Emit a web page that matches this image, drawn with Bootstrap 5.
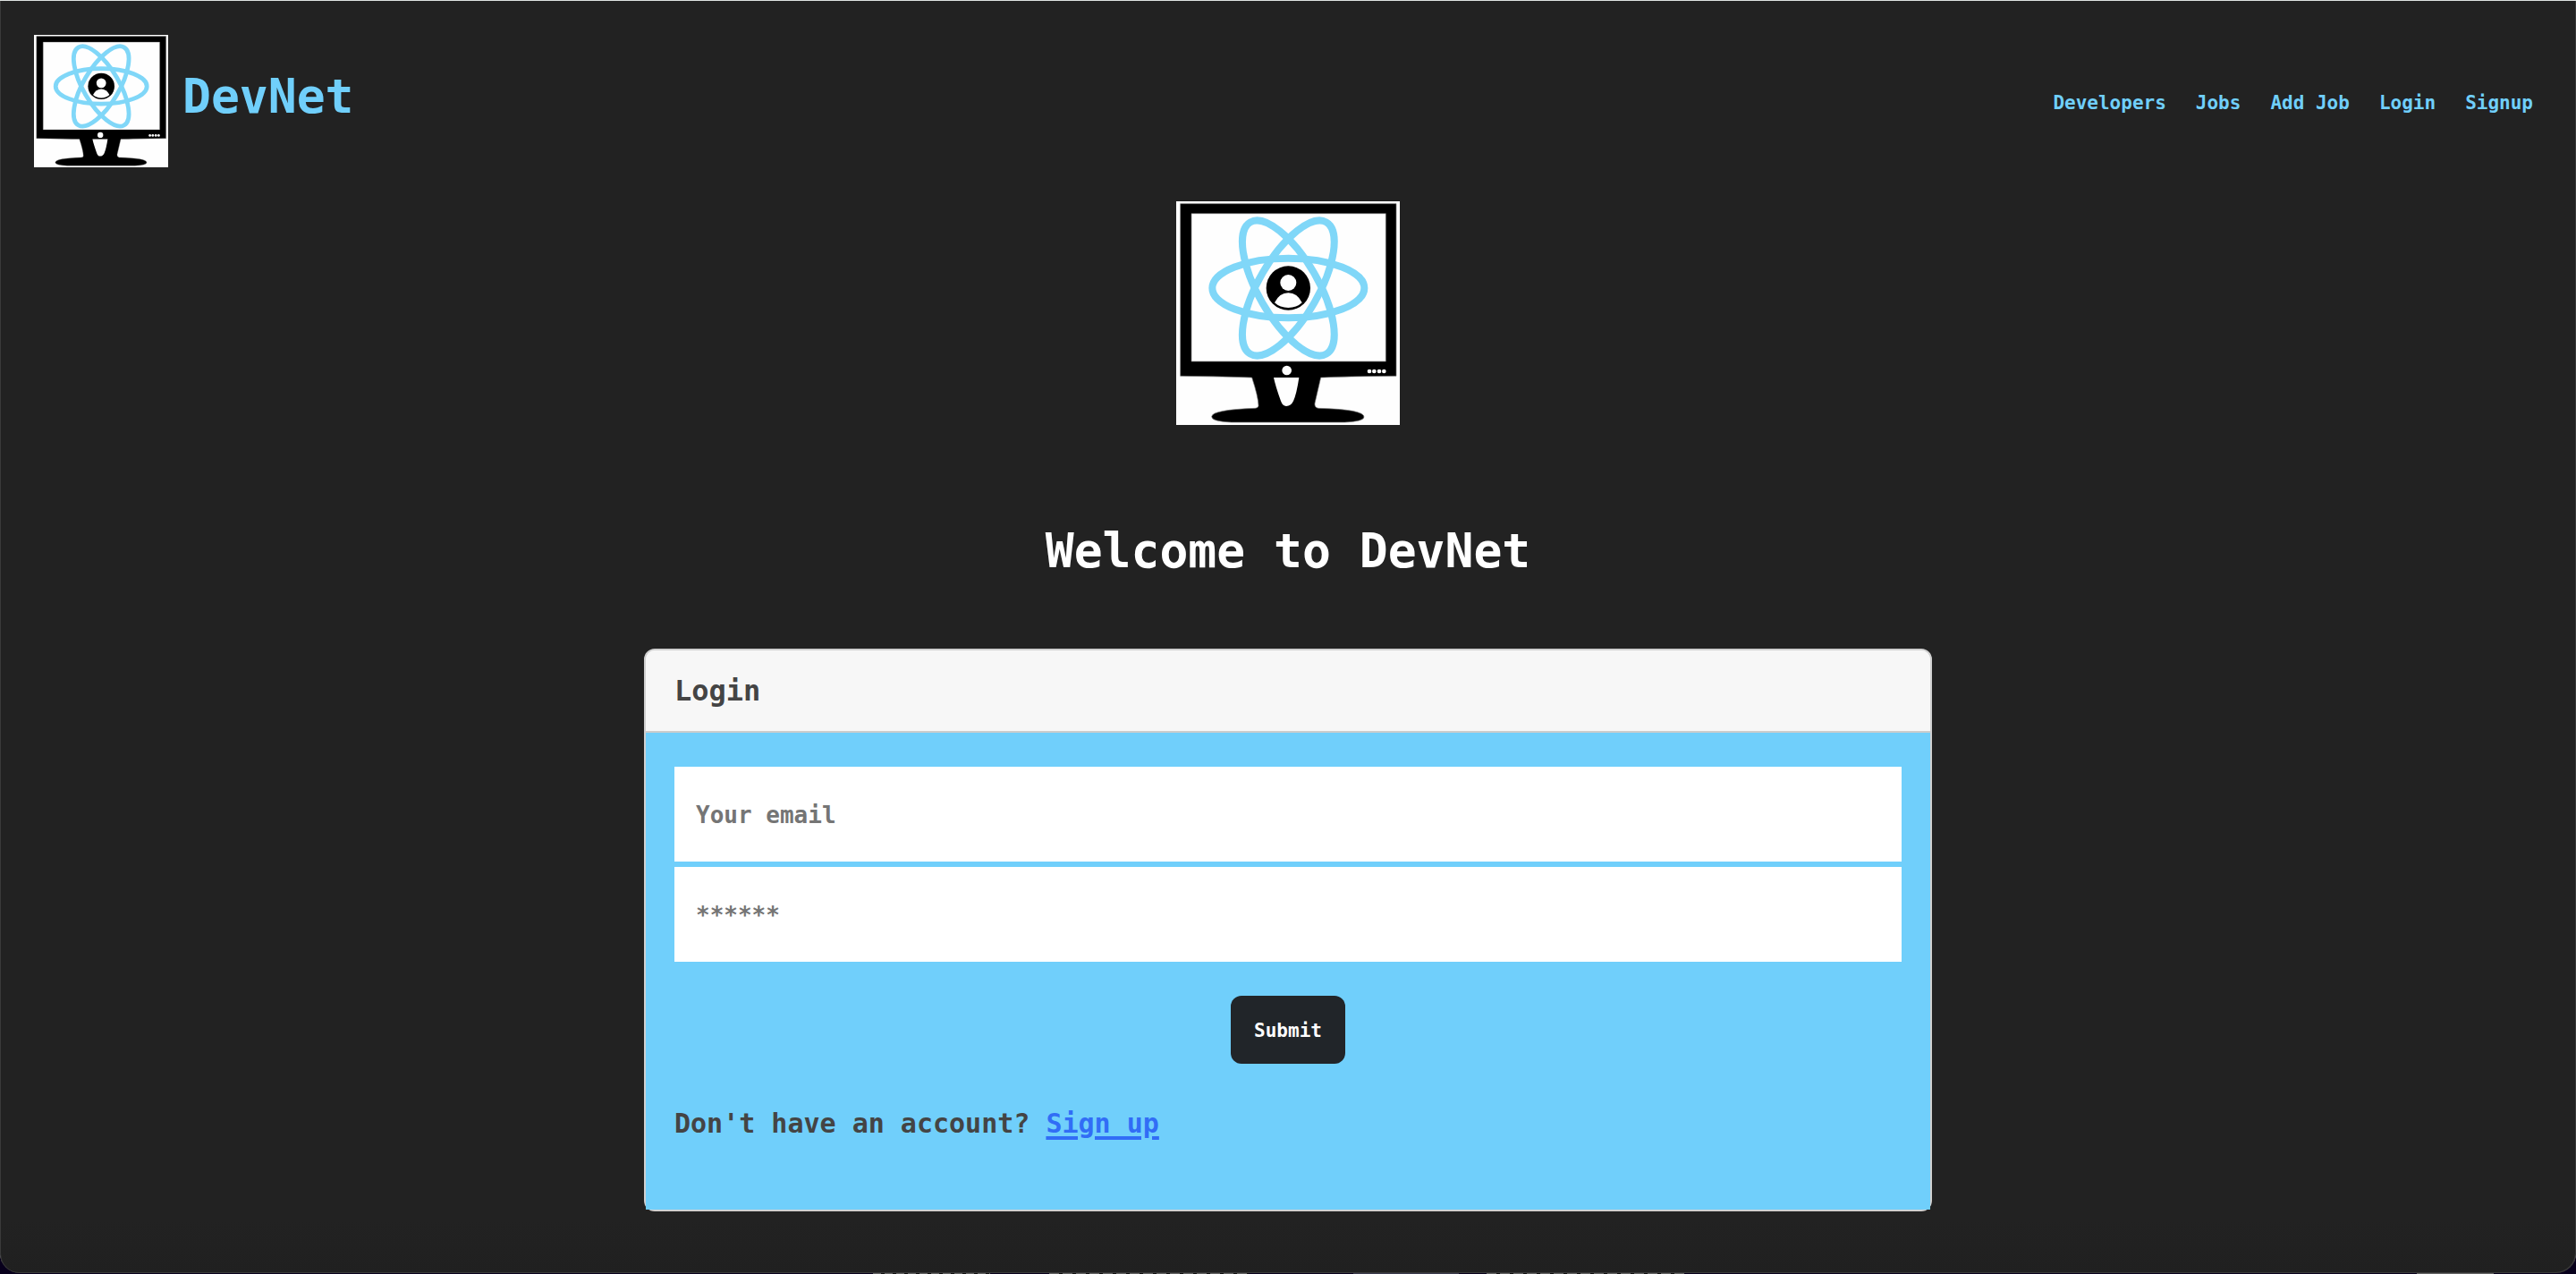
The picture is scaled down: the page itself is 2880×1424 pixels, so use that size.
<!DOCTYPE html>
<html lang="en">
<head>
<meta charset="utf-8">
<meta name="viewport" content="width=device-width, initial-scale=1">
<title>DevNet</title>
<link rel="stylesheet" href="https://cdn.jsdelivr.net/npm/bootstrap@5.3.0/dist/css/bootstrap.min.css">
<style>
  :root { --sky: #70cffb; --ink: #444; }
  body {
    font-family: "DejaVu Sans Mono", "Liberation Mono", monospace;
    font-weight: 700;
    background: #08001c;
    color: #fff;
  }
  .window {
    background: linear-gradient(to top, #202020, #222 60px);
    box-shadow: inset 0 1px #dfe3e2, inset 1px 0 #3a3a3a, inset -1px -1px #3a3a3a;
    border-radius: 0 0 22px 22px;
  }
  .site-nav { padding: 39px 48px 38px 38px; }
  .nav-logo { width: 150px; height: 148px; }
  .brand-name { font-size: 53px; line-height: 64px; padding-bottom: 10px; color: var(--sky); }
  .menu { gap: 33px; font-size: 21px; line-height: 32px; padding-top: 4px; }
  .menu a { color: var(--sky); }
  .hero-logo { width: 250px; height: 250px; }
  .hero-title { font-size: 53px; line-height: 64px; font-weight: 700; margin: 109px 0 77px; }
  .login-card {
    --bs-card-border-width: 2px;
    --bs-card-border-radius: 12px;
    --bs-card-inner-border-radius: 10px;
    --bs-card-border-color: #d0d0d0;
    --bs-card-cap-bg: #f7f7f7;
    --bs-card-bg: #f7f7f7;
    color: var(--ink);
  }
  .login-card .card-header { padding: 18px 32px; border-bottom-color: #ccc; }
  .login-card .card-body { background: var(--sky); padding: 38px 32px 69px; }
  .login-title { font-size: 32px; line-height: 54px; font-weight: 700; }
  .signup-line { font-size: 30px; line-height: 54px; font-weight: 700; margin: 40px 0 0; }
  .login-card .form-control {
    font-size: 26px;
    line-height: 40px;
    font-weight: 700;
    padding: 34px 24px 32px;
    border: 0;
    border-radius: 0;
  }
  .login-card .form-control::placeholder { color: #757575; }
  .fields { gap: 6px; margin-bottom: 38px; }
  .btn-send { font-size: 21px; line-height: 32px; font-weight: 700; padding: 23px 26px 21px; border: 0; border-radius: 12px; }
  .signup-line a { color: #316df6; text-decoration-thickness: 4px; text-underline-offset: 4px; }
  .behind {
    height: 1px;
    background:
      repeating-linear-gradient(to right, #666 0 9px, #111 9px 13px) 976px 0 / 131px 1px no-repeat,
      repeating-linear-gradient(to right, #666 0 11px, #111 11px 15px) 1173px 0 / 223px 1px no-repeat,
      linear-gradient(#3b3b4e, #3b3b4e) 1513px 0 / 118px 1px no-repeat,
      repeating-linear-gradient(to right, #666 0 11px, #111 11px 15px) 1662px 0 / 221px 1px no-repeat,
      linear-gradient(#666, #666) 2702px 0 / 86px 1px no-repeat;
  }
</style>
<script src="https://cdn.jsdelivr.net/npm/bootstrap@5.3.0/dist/js/bootstrap.bundle.min.js"></script>
</head>
<body>
<svg class="d-none" aria-hidden="true">
  <symbol id="devnet-logo" viewBox="45 45 750 750" preserveAspectRatio="none">
    <rect x="45" y="45" width="750" height="750" fill="#fefefe"/>
    <path d="M59 53H783V631Q600 632 530 636L510 722Q508 737 522 739Q675 743 675 768Q675 783 610 786H230Q164 783 164 767Q166 744 310 739Q321 738 321 730Q320 700 299 636Q220 633 59 631Z" stroke="#777" stroke-width="2"/>
    <path d="M96 86H748V582H96Z" fill="#fefefe" stroke="#777" stroke-width="2"/>
    <path d="M372 636H457Q449 690 438 715Q430 732 414 732Q402 732 396 715Q378 665 372 636Z" fill="#fefefe"/>
    <g fill="none" stroke="#80d7f8" stroke-width="24">
      <ellipse cx="421" cy="336" rx="255" ry="100"/>
      <ellipse cx="421" cy="336" rx="255" ry="100" transform="rotate(60 421 336)"/>
      <ellipse cx="421" cy="336" rx="255" ry="100" transform="rotate(120 421 336)"/>
    </g>
    <circle cx="421" cy="336" r="74"/>
    <g fill="#fefefe">
      <circle cx="421" cy="318" r="27"/>
      <path d="M375 385Q391 352 421 352Q451 352 467 385Q449 402 421 402Q393 402 375 385Z"/>
      <circle cx="416" cy="612" r="16"/>
      <circle cx="693" cy="615" r="7"/><circle cx="709" cy="615" r="7"/>
      <circle cx="726" cy="615" r="7"/><circle cx="742" cy="615" r="7"/>
    </g>
  </symbol>
</svg>
<div class="d-flex flex-column min-vh-100">
  <div class="window flex-grow-1">
    <header>
      <nav class="site-nav d-flex align-items-center justify-content-between" aria-label="Main">
        <a href="#" class="d-flex align-items-center text-decoration-none">
          <svg class="nav-logo me-3" aria-hidden="true"><use href="#devnet-logo"/></svg>
          <span class="brand-name">DevNet</span>
        </a>
        <ul class="menu list-unstyled d-flex mb-0">
          <li><a class="text-decoration-none" href="#">Developers</a></li>
          <li><a class="text-decoration-none" href="#">Jobs</a></li>
          <li><a class="text-decoration-none" href="#">Add Job</a></li>
          <li><a class="text-decoration-none" href="#">Login</a></li>
          <li><a class="text-decoration-none" href="#">Signup</a></li>
        </ul>
      </nav>
    </header>
    <main>
      <div class="text-center">
        <svg class="hero-logo d-block mx-auto" role="img" aria-label="DevNet logo"><use href="#devnet-logo"/></svg>
        <h1 class="hero-title">Welcome to DevNet</h1>
      </div>
      <div class="row g-0 justify-content-center">
        <div class="col-6">
          <section class="card login-card">
            <div class="card-header"><h2 class="login-title mb-0">Login</h2></div>
            <div class="card-body">
              <form>
                <div class="fields d-flex flex-column">
                  <input type="email" class="form-control" placeholder="Your email" aria-label="Your email">
                  <input type="password" class="form-control" placeholder="******" aria-label="Password">
                </div>
                <div class="text-center">
                  <button type="submit" class="btn btn-dark btn-send">Submit</button>
                </div>
              </form>
              <p class="signup-line">Don't have an account? <a href="#">Sign up</a></p>
            </div>
          </section>
        </div>
      </div>
    </main>
  </div>
  <div class="behind"></div>
</div>
</body>
</html>
